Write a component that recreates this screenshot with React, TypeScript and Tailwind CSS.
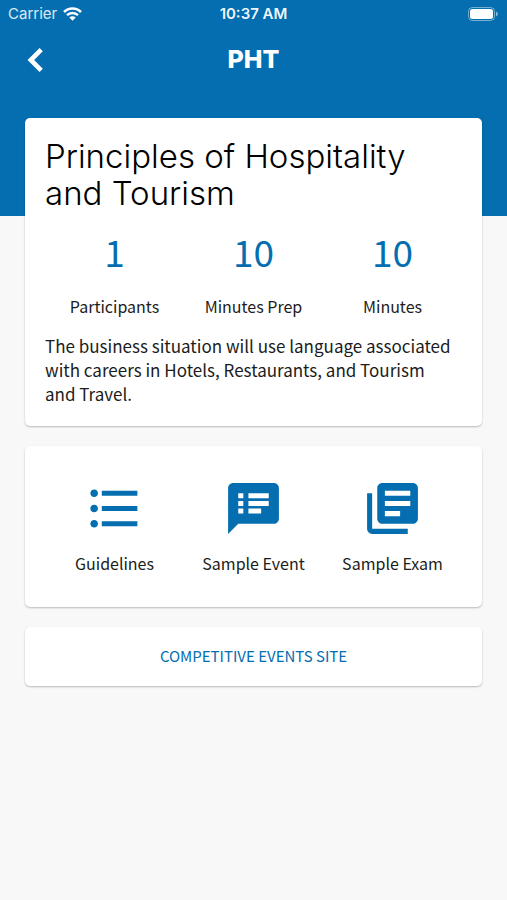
import type { ReactNode } from "react";
import { MdFormatListBulleted, MdLibraryBooks, MdSpeakerNotes } from "react-icons/md";

const stats = [
  { value: "1", label: "Participants" },
  { value: "10", label: "Minutes Prep" },
  { value: "10", label: "Minutes" },
];

const links = [
  { label: "Guidelines", Icon: MdFormatListBulleted },
  { label: "Sample Event", Icon: MdSpeakerNotes },
  { label: "Sample Exam", Icon: MdLibraryBooks },
];

const BackIcon = () => (
  <svg className="size-12" viewBox="0 0 48 48" fill="none">
    <path d="M29.2 13.600 18.800 24l10.400 10.400" stroke="white" strokeWidth="4.6" />
  </svg>
);

const WifiIcon = () => (
  <svg className="h-[14px] w-[19px]" viewBox="0 0 19 14" fill="none">
    <path d="M1 5a12 12 0 0 1 17 0" stroke="white" strokeWidth="2.6" />
    <path d="M4 8.2a7.8 7.8 0 0 1 11 0" stroke="white" strokeWidth="2.4" />
    <path d="M9.5 13.8 6.3 10.6a4.500 4.500 0 0 1 6.400 0Z" fill="white" />
  </svg>
);

const BatteryIcon = () => (
  <svg className="h-[14px] w-[31px]" viewBox="0 0 31 14" fill="none">
    <rect x="0.5" y="0.5" width="26" height="13" rx="4" stroke="white" strokeOpacity="0.45" />
    <rect x="2" y="2" width="23" height="10" rx="2.5" fill="white" />
    <path d="M28 4.6c1.2.4 1.9 1.3 1.9 2.4s-.7 2-1.9 2.4Z" fill="white" fillOpacity="0.5" />
  </svg>
);

const Card = ({ children }: { children: ReactNode }) => (
  <section className="rounded-[5px] bg-white shadow-[0_1px_2px_rgba(0,0,0,0.25)]">
    {children}
  </section>
);

const App = () => {
  return (
    <div className="min-h-screen bg-[#f8f8f8] font-['Noto_Sans_CJK_JP',sans-serif] text-[#1c1c1c]">
      <header className="h-[216px] bg-[#046eb0] text-white">
        <div className="grid h-7 grid-cols-3 items-center px-2 font-['Inter',sans-serif] text-[15px]">
          <div className="flex items-center gap-1.5">
            <span className="text-white/85">Carrier</span>
            <WifiIcon />
          </div>
          <div className="text-center font-semibold text-white/95">10:37 AM</div>
          <div className="flex justify-end">
            <BatteryIcon />
          </div>
        </div>
        <div className="grid h-16 grid-cols-3 items-center px-3">
          <button type="button" aria-label="Back" className="w-12">
            <BackIcon />
          </button>
          <h1 className="text-center font-['Inter',sans-serif] text-[25px] font-extrabold">PHT</h1>
        </div>
      </header>

      <main className="-mt-[98px] flex flex-col gap-5 px-[25px] pb-5">
        <Card>
          <div className="p-5">
            <h2 className="font-['Inter',sans-serif] text-[33px] leading-[37px] font-light text-black">
              Principles of Hospitality and Tourism
            </h2>
            <div className="mt-4 grid grid-cols-3 text-center">
              {stats.map((el) => (
                <div key={el.label}>
                  <div className="text-[37px] leading-[46px] text-[#046eb0]">{el.value}</div>
                  <div className="mt-5 text-base leading-6">{el.label}</div>
                </div>
              ))}
            </div>
            <p className="mt-4 text-[17px] leading-6">
              The business situation will use language associated with careers in Hotels,
              Restaurants, and Tourism <br />
              and Travel.
            </p>
          </div>
        </Card>

        <Card>
          <div className="grid grid-cols-3 px-5 py-8 text-center">
            {links.map(({ label, Icon }) => (
              <button key={label} type="button" className="flex flex-col items-center gap-3">
                <Icon className="size-[61px] text-[#046eb0]" />
                <span className="text-base leading-6">{label}</span>
              </button>
            ))}
          </div>
        </Card>

        <Card>
          <button type="button" className="h-[59px] w-full text-[15px] text-[#046eb0]">
            COMPETITIVE EVENTS SITE
          </button>
        </Card>
      </main>
    </div>
  );
};

export default App;
